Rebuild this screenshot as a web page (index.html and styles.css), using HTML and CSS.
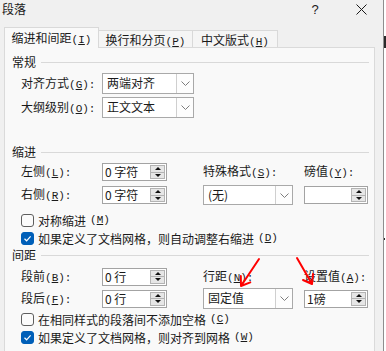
FILE: index.html
```html
<!DOCTYPE html>
<html lang="zh-CN">
<head>
    <meta charset="UTF-8">
    <meta name="viewport" content="width=device-width, initial-scale=1.0">
    <title>段落</title>
    <link rel="stylesheet" href="styles.css">
</head>
<body>

    <div class="dialog">
        <div class="titlebar">
            <span class="title">段落</span>
            <span class="title-btn help">?</span>
            <span class="title-btn close">
                <svg width="11" height="11" viewBox="0 0 11 11"><path d="M0.5 0.5L10.5 10.5M10.5 0.5L0.5 10.5" stroke="#1a1a1a" stroke-width="1"/></svg>
            </span>
        </div>

        <div class="tabs">
            <div class="tab tab-first active">缩进和间距<span class="key">(<u>I</u>)</span></div>
            <div class="tab tab-second">换行和分页<span class="key">(<u>P</u>)</span></div>
            <div class="tab tab-third">中文版式<span class="key">(<u>H</u>)</span></div>
        </div>

        <div class="panel">
            <!-- 常规 -->
            <div class="group-title"><span>常规</span><i></i></div>
            <div class="grid general">
                <label>对齐方式<span class="key">(<u>G</u>):</span></label>
                <div class="combo combo-wide">
                    <span class="combo-text">两端对齐</span>
                    <span class="combo-arrow"><svg width="9" height="5" viewBox="0 0 9 5"><polyline points="0.5,0.5 4.5,4.5 8.5,0.5" fill="none" stroke="#7d7d7d"/></svg></span>
                </div>
                <label>大纲级别<span class="key">(<u>O</u>):</span></label>
                <div class="combo combo-wide">
                    <span class="combo-text">正文文本</span>
                    <span class="combo-arrow"><svg width="9" height="5" viewBox="0 0 9 5"><polyline points="0.5,0.5 4.5,4.5 8.5,0.5" fill="none" stroke="#7d7d7d"/></svg></span>
                </div>
            </div>

            <!-- 缩进 -->
            <div class="group-title indent-title"><span>缩进</span><i></i></div>
            <div class="grid indent">
                <label>左侧<span class="key">(<u>L</u>):</span></label>
                <div class="spin-box"><span class="spin-text">0 字符</span><span class="spin-btns"><span class="spin-up"></span><span class="spin-down"></span></span></div>
                <label>特殊格式<span class="key">(<u>S</u>):</span></label>
                <label>磅值<span class="key">(<u>Y</u>):</span></label>

                <label>右侧<span class="key">(<u>R</u>):</span></label>
                <div class="spin-box"><span class="spin-text">0 字符</span><span class="spin-btns"><span class="spin-up"></span><span class="spin-down"></span></span></div>
                <div class="combo combo-small">
                    <span class="combo-text">(无)</span>
                    <span class="combo-arrow"><svg width="9" height="5" viewBox="0 0 9 5"><polyline points="0.5,0.5 4.5,4.5 8.5,0.5" fill="none" stroke="#7d7d7d"/></svg></span>
                </div>
                <div class="spin-box spin-narrow"><span class="spin-text"></span><span class="spin-btns"><span class="spin-up"></span><span class="spin-down"></span></span></div>
            </div>
            <div class="checks indent-checks">
                <div class="check-row"><span class="checkbox"></span>对称缩进<span class="key">(<u>M</u>)</span></div>
                <div class="check-row"><span class="checkbox checked"><svg width="11" height="11" viewBox="0 0 11 11"><polyline points="2.5,5.8 4.6,7.8 8.6,3.4" fill="none" stroke="#ffffff" stroke-width="1.2"/></svg></span>如果定义了文档网格，则自动调整右缩进<span class="key">(<u>D</u>)</span></div>
            </div>

            <!-- 间距 -->
            <div class="group-title"><span>间距</span><i></i></div>
            <div class="grid spacing">
                <label>段前<span class="key">(<u>B</u>):</span></label>
                <div class="spin-box"><span class="spin-text">0 行</span><span class="spin-btns"><span class="spin-up"></span><span class="spin-down"></span></span></div>
                <label>行距<span class="key">(<u>N</u>):</span></label>
                <label>设置值<span class="key">(<u>A</u>):</span></label>

                <label>段后<span class="key">(<u>F</u>):</span></label>
                <div class="spin-box"><span class="spin-text">0 行</span><span class="spin-btns"><span class="spin-up"></span><span class="spin-down"></span></span></div>
                <div class="combo combo-small combo-tall">
                    <span class="combo-text">固定值</span>
                    <span class="combo-arrow"><svg width="9" height="5" viewBox="0 0 9 5"><polyline points="0.5,0.5 4.5,4.5 8.5,0.5" fill="none" stroke="#7d7d7d"/></svg></span>
                </div>
                <div class="spin-box spin-narrow"><span class="spin-text">1磅</span><span class="spin-btns"><span class="spin-up"></span><span class="spin-down"></span></span></div>
            </div>
            <div class="checks spacing-checks">
                <div class="check-row"><span class="checkbox"></span>在相同样式的段落间不添加空格<span class="key">(<u>C</u>)</span></div>
                <div class="check-row"><span class="checkbox checked"><svg width="11" height="11" viewBox="0 0 11 11"><polyline points="2.5,5.8 4.6,7.8 8.6,3.4" fill="none" stroke="#ffffff" stroke-width="1.2"/></svg></span>如果定义了文档网格，则对齐到网格<span class="key">(<u>W</u>)</span></div>
            </div>
        </div>
    </div>

    <div class="doc-edge"><span class="doc-mark"></span><span class="doc-mark doc-mark-low"></span></div>

    <!-- red annotation arrows drawn over the dialog -->
    <svg class="marks" width="386" height="351" viewBox="0 0 386 351">
        <g fill="none" stroke="#ff0000" stroke-width="2" stroke-linecap="round" stroke-linejoin="round">
            <path d="M259 259L241 286M241 286L240.8 276M241 286L250.3 282.4"/>
            <path d="M297 258L312 284M312 284L313 274M312 284L303 280"/>
        </g>
    </svg>

</body>
</html>
```

FILE: styles.css
```css
/* Dialog frame */
body {
    margin: 0;
    font-family: "Noto Sans CJK SC", "Noto Sans", sans-serif;
    font-size: 12px;
    color: #1a1a1a;
    background-color: #ffffff;
    display: flex;
    height: 351px;
    overflow: hidden;
    position: relative;
}

.dialog {
    width: 384px;
    flex: none;
    box-sizing: border-box;
    background-color: #f0f0f0;
    border-right: 1px solid #8e8e8e;
}

.doc-edge {
    width: 2px;
    display: flex;
    flex-direction: column;
}

.doc-mark {
    display: block;
    margin-top: 36px;
    height: 12px;
    background-color: #2a2a2a;
}

.doc-mark-low {
    margin-top: 190px;
    height: 2px;
    width: 1px;
}

/* Title bar */
.titlebar {
    display: flex;
    align-items: center;
    height: 18px;
}

.title {
    padding-left: 2px;
    line-height: 18px;
}

.title-btn {
    display: flex;
    justify-content: center;
    align-items: center;
    height: 18px;
}

.help {
    margin-left: auto;
    width: 48px;
    font-family: "Liberation Sans", sans-serif;
    font-size: 13px;
}

.close {
    width: 44px;
}

/* Tabs */
.tabs {
    display: flex;
    align-items: flex-end;
    height: 20px;
    margin-top: 9px;
    padding-left: 4px;
}

.tab {
    height: 17px;
    box-sizing: border-box;
    padding-top: 2px;
    line-height: 14px;
    text-align: center;
    background-color: #f5f5f5;
    border: 1px solid #d9d9d9;
    border-bottom: none;
    border-left: none;
}

.tab.active {
    position: relative;
    z-index: 1;
    height: 21px;
    margin-bottom: -1px;
    padding-top: 3px;
    background-color: #f9f9f9;
    border-left: 1px solid #d9d9d9;
}

.tab-first { width: 95px; }
.tab-second { width: 94px; }
.tab-third { width: 85px; }

.key {
    font-family: "Liberation Mono", monospace;
    font-size: 11px;
}

/* Panel */
.panel {
    margin-left: 4px;
    width: 371px;
    height: 320px;
    box-sizing: border-box;
    border: 1px solid #dadada;
    background-color: #f9f9f9;
}

.group-title {
    display: flex;
    align-items: center;
    height: 16px;
    padding-left: 7px;
    line-height: 16px;
}

.group-title:first-child {
    margin-top: 6px;
}

.group-title i {
    flex: 1;
    height: 1px;
    margin: 0 5px 0 5px;
    background-color: #d9d9d9;
}

.indent-title {
    margin-top: 26px;
}

.grid {
    display: grid;
    padding-left: 16px;
    align-items: center;
}

.grid label {
    line-height: 16px;
}

.general {
    margin-top: 3px;
    grid-template-columns: 81px 92px;
    grid-auto-rows: 21px;
    row-gap: 3px;
}

.indent {
    margin-top: 2px;
    grid-template-columns: 81px 101px 101px 64px;
    grid-auto-rows: 20px;
    row-gap: 3px;
}

.spacing {
    margin-top: 3px;
    grid-template-columns: 81px 101px 101px 64px;
    grid-auto-rows: 21px;
    row-gap: 1px;
}

/* Combo boxes */
.combo {
    display: flex;
    box-sizing: border-box;
    height: 21px;
    border: 1px solid #a9a9a9;
    background-color: #ffffff;
}

.combo-wide { width: 92px; }

.combo-small {
    width: 90px;
    height: 20px;
}

.combo-tall { height: 21px; }

.combo-text {
    flex: 1;
    padding-left: 4px;
    line-height: 18px;
}

.combo-arrow {
    width: 16px;
    display: flex;
    justify-content: center;
    align-items: center;
    border-left: 1px solid #cfcfcf;
    background-color: #fdfdfd;
}

/* Spin boxes */
.spin-box {
    display: flex;
    box-sizing: border-box;
    width: 65px;
    height: 18px;
    border: 1px solid #a3a3a3;
    background-color: #ffffff;
}

.spin-narrow { width: 64px; }

.spin-text {
    flex: 1;
    padding-left: 2px;
    line-height: 16px;
}

.spin-btns {
    display: flex;
    flex-direction: column;
    width: 15px;
    box-sizing: border-box;
    margin: 1px 1px 1px 0;
    border: 1px solid #b3b3b3;
    background-color: #e6e6e6;
}

.spin-up, .spin-down {
    flex: 1;
    display: flex;
    justify-content: center;
    align-items: center;
}

.spin-up {
    border-bottom: 1px solid #b3b3b3;
}

.spin-up::before {
    content: "";
    border-left: 3px solid transparent;
    border-right: 3px solid transparent;
    border-bottom: 3px solid #111111;
}

.spin-down::before {
    content: "";
    border-left: 3px solid transparent;
    border-right: 3px solid transparent;
    border-top: 3px solid #111111;
}

/* Check boxes */
.check-row {
    display: flex;
    align-items: center;
    height: 18px;
    padding-left: 16px;
    gap: 4px;
}

.indent-checks { margin-top: 6px; }
.spacing-checks { margin-top: 1px; }

.checkbox {
    width: 13px;
    height: 13px;
    box-sizing: border-box;
    border: 1px solid #5e5e5e;
    border-radius: 3px;
    background-color: #fbfbfb;
    display: flex;
    justify-content: center;
    align-items: center;
}

.checkbox.checked {
    border-color: #005fb8;
    background-color: #005fb8;
}

/* Annotation overlay */
.marks {
    position: absolute;
    left: 0;
    top: 0;
    pointer-events: none;
}
```
